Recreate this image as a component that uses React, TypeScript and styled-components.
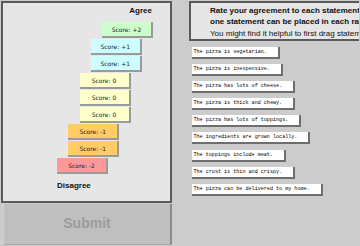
import React from "react";
import styled, { createGlobalStyle } from "styled-components";

const Global = createGlobalStyle`
  html, body { margin: 0; padding: 0; background: #cccccc; overflow: hidden; }
  body { width: 360px; height: 246px; }
`;

const Page = styled.div`
  display: flex;
  align-items: flex-start;
  gap: 17px;
  padding: 1px 0 0 1px;
  width: 359px;
  box-sizing: border-box;
`;

const LeftCol = styled.div`
  width: 171px;
  flex: none;
  display: flex;
  flex-direction: column;
`;

const Panel = styled.div`
  box-sizing: border-box;
  height: 202px;
  border: 2px solid #5a5a5a;
  background: #e6e6e6;
  padding-top: 3px;
  display: flex;
  flex-direction: column;
`;

const Label = styled.div<{ $left: number }>`
  font-family: "Liberation Sans", Arial, sans-serif;
  font-weight: bold;
  font-size: 8px;
  line-height: 10px;
  color: #111;
  margin-left: ${(p) => p.$left}px;
`;

const AgreeLabel = styled(Label)`
  width: 50px;
  text-align: right;
  margin-bottom: 6px;
`;

const DisagreeLabel = styled(Label)`
  margin-top: 6px;
`;

const palette: Record<number, string> = {
  2: "#ccffcc",
  1: "#ccffff",
  0: "#ffffcc",
  [-1]: "#ffcc66",
  [-2]: "#ff9999",
};

const ScoreBox = styled.div<{ $score: number }>`
  box-sizing: content-box;
  width: 49px;
  height: 14px;
  margin-left: ${(p) => 54 + (p.$score + 2) * 11.25}px;
  margin-bottom: 1px;
  background: ${(p) => palette[p.$score]};
  border-right: 2px solid #9a9a9a;
  border-bottom: 2px solid #9a9a9a;
  display: flex;
  align-items: center;
  justify-content: center;
  font-family: "DejaVu Sans", Verdana, sans-serif;
  font-size: 6px;
  color: #222;
`;

const SubmitButton = styled.button`
  box-sizing: border-box;
  margin: 1px 0 0 2px;
  width: 169px;
  height: 41px;
  background: #bfbfbf;
  border: none;
  border-right: 2px solid #8a8a8a;
  border-bottom: 1px solid #a8a8a8;
  border-left: 1px solid #d0d0d0;
  font-family: "Liberation Sans", Arial, sans-serif;
  font-weight: bold;
  font-size: 14px;
  color: #9c9c9c;
  padding: 0 0 2px;
`;

const RightCol = styled.div`
  flex: 1;
  min-width: 0;
  overflow: hidden;
  display: flex;
  flex-direction: column;
`;

const Instructions = styled.div`
  box-sizing: border-box;
  width: 420px;
  height: 40px;
  border: 2px solid #5a5a5a;
  background: #e6e6e6;
  padding: 3px 0 0 19px;
  font-family: "Liberation Sans", Arial, sans-serif;
  font-size: 8px;
  line-height: 10.5px;
  color: #111;
  white-space: nowrap;
`;

const Strong = styled.div`
  font-weight: bold;
`;

const Hint = styled.div`
  margin-top: 2px;
`;

const StatementList = styled.div`
  display: flex;
  flex-direction: column;
  align-items: flex-start;
  margin: 6px 0 0 3px;
  gap: 5.1px;
`;

const Statement = styled.div`
  box-sizing: border-box;
  height: 12px;
  background: #ffffff;
  border-right: 2px solid #6e6e6e;
  border-bottom: 2px solid #6e6e6e;
  padding: 0 11px 0 1.5px;
  display: flex;
  align-items: center;
  font-family: "Liberation Mono", "Courier New", monospace;
  font-size: 5.1px;
  color: #000;
  white-space: pre;
`;

const scores = [2, 1, 1, 0, 0, 0, -1, -1, -2];

const statements = [
  "The pizza is vegetarian.",
  "The pizza is inexpensive.",
  "The pizza has lots of cheese.",
  "The pizza is thick and chewy.",
  "The pizza has lots of toppings.",
  "The ingredients are grown locally.",
  "The toppings include meat.",
  "The crust is thin and crispy.",
  "The pizza can be delivered to my home.",
];

const fmt = (s: number) => (s > 0 ? `+${s}` : `${s}`);

export default function App() {
  return (
    <>
      <Global />
      <Page>
        <LeftCol>
          <Panel>
            <AgreeLabel $left={99}>Agree</AgreeLabel>
            {scores.map((s, i) => (
              <ScoreBox key={i} $score={s}>
                Score: {fmt(s)}
              </ScoreBox>
            ))}
            <DisagreeLabel $left={54}>Disagree</DisagreeLabel>
          </Panel>
          <SubmitButton>Submit</SubmitButton>
        </LeftCol>
        <RightCol>
          <Instructions>
            <Strong>Rate your agreement to each statement below. Only</Strong>
            <Strong>one statement can be placed in each rating slot.</Strong>
            <Hint>You might find it helpful to first drag statements into the slots.</Hint>
          </Instructions>
          <StatementList>
            {statements.map((t) => (
              <Statement key={t}>{t}</Statement>
            ))}
          </StatementList>
        </RightCol>
      </Page>
    </>
  );
}
